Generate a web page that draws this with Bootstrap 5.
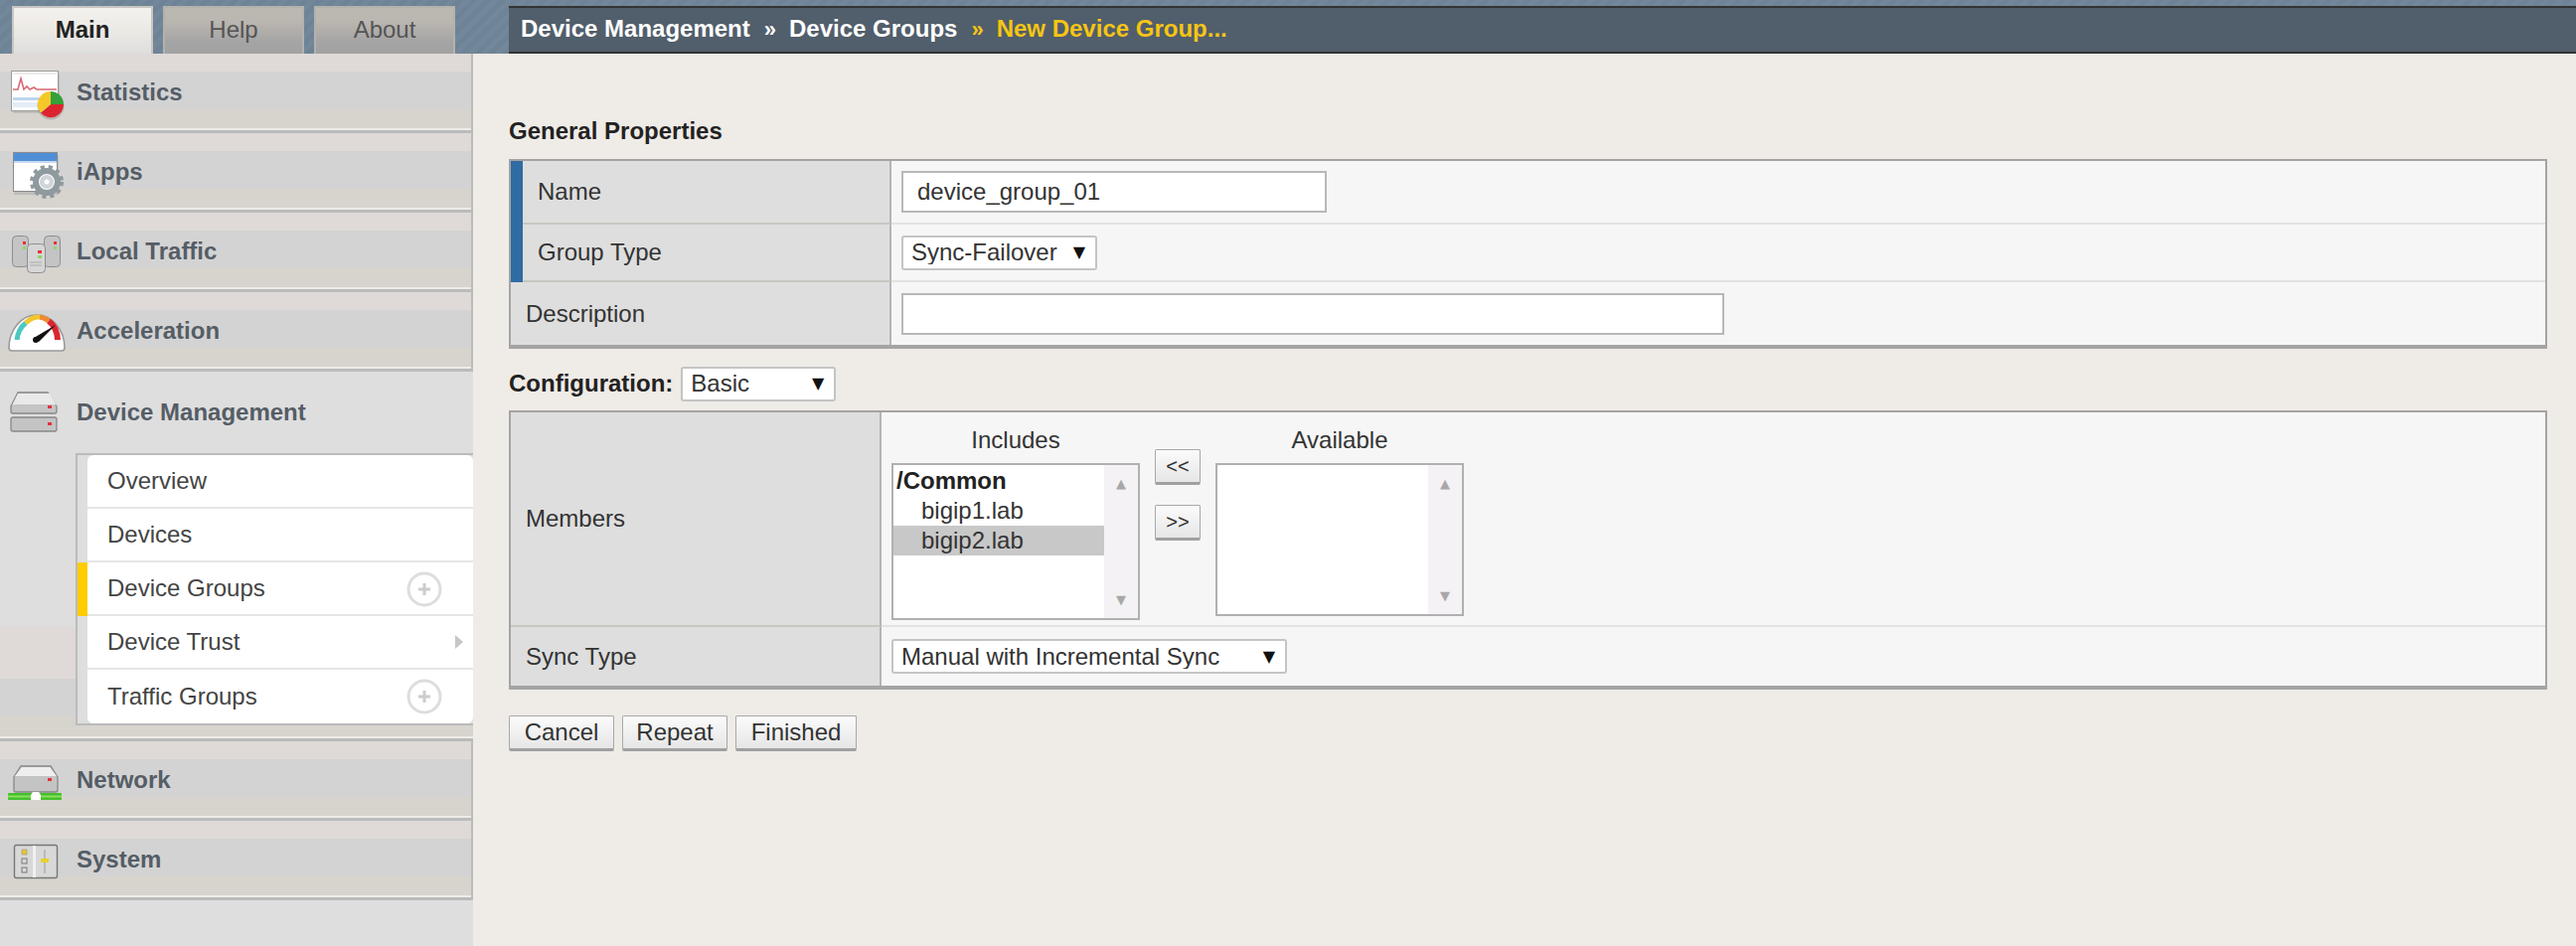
<!DOCTYPE html>
<html lang="en">
<head>
    <meta charset="UTF-8">
    <meta name="viewport" content="width=device-width, initial-scale=1.0">
    <title>New Device Group</title>
    <link href="https://cdn.jsdelivr.net/npm/bootstrap@5.3.0/dist/css/bootstrap.min.css" rel="stylesheet">
    <style>
        html, body { height: 100%; }
        body { background: #efebe6; font-family: "Liberation Sans", Arial, sans-serif; font-size: 24px; color: #333; overflow: hidden; }

        /* top strip */
        .top-strip { height: 54px; background: repeating-linear-gradient(135deg, #72889a 0 5px, #6e8395 5px 10px); }
        .tab-box { width: 512px; padding: 6px 0 0 12px; gap: 10px; }
        .tab-item { width: 142px; height: 48px; line-height: 44px; text-align: center; color: #555; text-decoration: none; border: 2px solid #b4b2ad; border-bottom: 0; background: linear-gradient(#bcb8b2, #bab6b0 30%, #a4a4a4 75%, #a2a2a2); }
        .tab-item.on { color: #222; font-weight: 700; border-color: #c8c6c2; background: linear-gradient(#f3f1ef, #eeebe6 40%, #dedede); }
        .crumb-bar { flex: 1; margin-top: 6px; height: 48px; padding-left: 12px; background: #515e6b; border-top: 2px solid #333; border-bottom: 2px solid #333; color: #fff; font-weight: 700; line-height: 42px; white-space: nowrap; }
        .crumb-sep { margin: 0 13px 0 14px; font-size: 22px; }
        .crumb-now { color: #f6c514; }

        /* side menu */
        .side-menu { width: 476px; flex: none; background: #dedede; height: 898px; }
        .menu-item { height: 80px; border-right: 2px solid #bbb; border-bottom: 3px solid #bbb; box-shadow: inset 0 -2px 0 #efece8; background: linear-gradient(#dfdad7 0 18px, #d3d3d3 18px 56px, #d7d4ce 56px); color: #555d66; font-weight: 700; text-decoration: none; }
        .menu-item svg, .menu-head svg { width: 60px; height: 60px; margin: 0 9px 0 8px; flex: none; }
        .menu-open { background: linear-gradient(to top, #d7d4ce 0 23px, #d3d3d3 23px 60px, #dfdad7 60px 113px, #dedede 113px); height: 372px; border-bottom: 3px solid #bbb; box-shadow: inset 0 -2px 0 #efece8; }
        .menu-head { height: 82px; color: #555d66; font-weight: 700; }
        .sub-menu { margin-left: 76px; border: 2px solid #bbb; border-right: 0; background: #dedede; padding-left: 10px; }
        .sub-row { height: 54px; padding: 0 0 0 20px; background: #fff; border: 0; border-bottom: 2px solid #e6e6e6; border-radius: 0; color: #444; position: relative; }
        .sub-row:last-child { border-bottom: 0; }
        .sub-row.on::before { content: ""; position: absolute; left: -10px; top: 0; bottom: -2px; width: 10px; background: #fc0; }
        .add-ring { position: absolute; right: 31px; top: 9px; width: 36px; height: 36px; }
        .more-arrow { position: absolute; right: 10px; top: 19px; width: 0; height: 0; border-left: 8px solid #c6c6c6; border-top: 7px solid transparent; border-bottom: 7px solid transparent; }

        /* form area */
        .form-area { padding: 0 29px 0 36px; }
        .sect-title { font-weight: 700; color: #222; }
        .prop-table { width: 100%; border-collapse: separate; border-spacing: 0; border: 2px solid #a4a4a4; border-bottom-width: 4px; }
        .prop-table th { background: #dedede; font-weight: 400; color: #333; border-right: 2px solid #b4b4b4; border-bottom: 2px solid #c8c6c2; padding: 0 0 0 15px; position: relative; }
        .prop-table td { background: #f6f6f6; border-bottom: 2px solid #e2e2e2; padding: 0 0 0 10px; }
        .prop-table tr:last-child th, .prop-table tr:last-child td { border-bottom: 0; }
        .prop-table th.must { padding-left: 27px; }
        .prop-table th.must::before { content: ""; position: absolute; left: 0; top: 0; bottom: -2px; width: 12px; background: #2f6ca3; }
        .text-in { height: 42px; border: 2px solid #b8b8b8; border-radius: 0; padding: 0 14px; font-size: 24px; color: #333; background: #fff; line-height: 1; }
        .pick-wrap { display: inline-block; position: relative; }
        .pick-wrap::after { content: "▼"; position: absolute; right: 12px; top: 50%; transform: translateY(-50%); font-size: 16px; color: #111; font-family: "DejaVu Sans", sans-serif; pointer-events: none; }
        .pick-in { appearance: none; display: block; height: 35px; padding: 0 0 0 8px; font-family: inherit; font-size: 24px; color: #333; background: #fff; border: 2px solid #c4c4c4; border-radius: 3px; line-height: 1; }
        .list-box { width: 250px; height: 158px; border: 2px solid #b0b0b0; background: #fff; line-height: 30px; color: #333; }
        .list-box.short { height: 154px; }
        .list-lines { flex: 1; padding-top: 1px; }
        .list-lines div { padding-left: 28px; }
        .list-lines .grp { padding-left: 3px; font-weight: 700; color: #222; }
        .list-lines .sel { background: #c8c8c8; }
        .scroll-strip { width: 34px; background: #f5f2f5; color: #a8a8a8; font-size: 13px; line-height: 1; padding: 12px 0; font-family: "DejaVu Sans", sans-serif; }
        .plain-btn { height: 36px; padding: 0; font-size: 24px; line-height: 1; color: #333; border: 1px solid #a8a8a8; border-bottom: 3px solid #a0a0a0; border-radius: 2px; background: linear-gradient(#fbfbfb, #e6e6e6); }
        .w-cancel { width: 106px; }
        .w-repeat { width: 106px; }
        .w-finish { width: 122px; }
        .w-move { width: 46px; font-size: 20px; }
    </style>
</head>
<body>
    <div class="top-strip d-flex">
        <div class="tab-box d-flex">
            <a href="#" class="tab-item on">Main</a>
            <a href="#" class="tab-item">Help</a>
            <a href="#" class="tab-item">About</a>
        </div>
        <div class="crumb-bar">Device Management<span class="crumb-sep">»</span>Device Groups<span class="crumb-sep crumb-now">»</span><span class="crumb-now">New Device Group...</span></div>
    </div>

    <div class="d-flex">
        <nav class="side-menu d-flex flex-column">
            <a href="#" class="menu-item d-flex align-items-center">
                <svg viewBox="0 0 60 60">
                    <rect x="5" y="11" width="47" height="40" fill="#999" opacity=".35"/>
                    <rect x="3.5" y="8.5" width="47" height="40" fill="#fff" stroke="#9a9a9a"/>
                    <rect x="5" y="10" width="44" height="2" fill="#f0eaea"/>
                    <path d="M5 27h5l3-11 3 11 3-3 3 3 4-2 3 2h20" fill="none" stroke="#d66a72" stroke-width="1.6"/>
                    <rect x="5" y="35" width="44" height="3" fill="#bcd6ee"/>
                    <rect x="5" y="40" width="44" height="5" fill="#e3edf6"/>
                    <circle cx="43" cy="44" r="13.5" fill="#777" opacity=".35"/>
                    <path d="M43 42V29a13 13 0 0 1 13 13z" fill="#35a13a"/>
                    <path d="M43 42H56a13 13 0 0 1-23 8.5z" fill="#dc2430"/>
                    <path d="M43 42L33 50.5A13 13 0 0 1 43 29z" fill="#f5c82a"/>
                </svg>
                Statistics
            </a>
            <a href="#" class="menu-item d-flex align-items-center">
                <svg viewBox="0 0 60 60">
                    <rect x="6" y="13" width="45" height="40" fill="#888" opacity=".3"/>
                    <rect x="5.5" y="10.5" width="44" height="39" fill="#fff" stroke="#8a8a8a"/>
                    <rect x="6" y="11" width="43" height="8" fill="#4f8fd8"/>
                    <rect x="6" y="19" width="43" height="2" fill="#c8d8ee"/>
                    <circle cx="39" cy="40" r="11" fill="none" stroke="#8f9a9f" stroke-width="6"/>
                    <circle cx="39" cy="40" r="15" fill="none" stroke="#8f9a9f" stroke-width="4" stroke-dasharray="4 4"/>
                    <circle cx="39" cy="40" r="7" fill="#cfd5d8"/>
                    <circle cx="39" cy="40" r="2.5" fill="#fff"/>
                </svg>
                iApps
            </a>
            <a href="#" class="menu-item d-flex align-items-center">
                <svg viewBox="0 0 60 60">
                    <rect x="4.5" y="14.5" width="16" height="31" rx="4" fill="#c4c4c4" stroke="#8e8e8e"/>
                    <rect x="36.5" y="14.5" width="16" height="31" rx="4" fill="#c4c4c4" stroke="#8e8e8e"/>
                    <rect x="19.5" y="22.5" width="18" height="29" rx="4" fill="#d6d6d6" stroke="#8e8e8e"/>
                    <rect x="15" y="20" width="3" height="3" fill="#e8303c"/>
                    <rect x="15" y="25" width="3" height="3" fill="#8ed66a"/>
                    <rect x="46" y="20" width="3" height="3" fill="#e8303c"/>
                    <rect x="46" y="25" width="3" height="3" fill="#8ed66a"/>
                    <rect x="30" y="29" width="4" height="3" fill="#e8303c"/>
                    <rect x="30" y="34" width="4" height="3" fill="#8ed66a"/>
                    <path d="M22 41h12M22 44h12" stroke="#aaa"/>
                </svg>
                Local Traffic
            </a>
            <a href="#" class="menu-item d-flex align-items-center">
                <svg viewBox="0 0 60 60">
                    <path d="M1 47a28 33 0 0 1 56 0q0 3-3 3H4q-3 0-3-3z" fill="#fff" stroke="#999" stroke-width="1.6"/>
                    <path d="M9 39a20 24 0 0 1 9-17" fill="none" stroke="#4cc8c0" stroke-width="5"/>
                    <path d="M18 22a20 24 0 0 1 14-6" fill="none" stroke="#f2c62e" stroke-width="5"/>
                    <path d="M32 16a20 24 0 0 1 9 4" fill="none" stroke="#f08a30" stroke-width="5"/>
                    <path d="M41 20a20 24 0 0 1 9 19" fill="none" stroke="#d9262e" stroke-width="6"/>
                    <path d="M26 37L48 24 31 41z" fill="#111"/>
                    <circle cx="28" cy="39" r="3" fill="#111"/>
                </svg>
                Acceleration
            </a>
            <div class="menu-open">
                <div class="menu-head d-flex align-items-center">
                    <svg viewBox="0 0 60 60">
                        <path d="M3 29v-5l7-14h30l9 14v5q0 2-2 2H5q-2 0-2-2z" fill="#c4c4c4" stroke="#888" stroke-width="1.3"/>
                        <path d="M4 23q1-1 3-1h38q3 0 4 1l-7-12H10z" fill="#e9e9e9"/>
                        <rect x="40" y="23" width="4" height="3" fill="#e8303c"/>
                        <rect x="3" y="35" width="46" height="14" rx="2" fill="#c4c4c4" stroke="#888" stroke-width="1.3"/>
                        <rect x="40" y="40" width="4" height="3" fill="#e8303c"/>
                    </svg>
                    Device Management
                </div>
                <div class="sub-menu">
                    <ul class="list-group">
                        <li class="list-group-item sub-row d-flex align-items-center">Overview</li>
                        <li class="list-group-item sub-row d-flex align-items-center">Devices</li>
                        <li class="list-group-item sub-row on d-flex align-items-center">Device Groups
                            <svg class="add-ring" viewBox="0 0 36 36"><circle cx="18" cy="18" r="16" fill="#fff" stroke="#ddd" stroke-width="3"/><path d="M18 12v12M12 18h12" stroke="#ccc" stroke-width="3"/></svg>
                        </li>
                        <li class="list-group-item sub-row d-flex align-items-center">Device Trust<span class="more-arrow"></span></li>
                        <li class="list-group-item sub-row d-flex align-items-center">Traffic Groups
                            <svg class="add-ring" viewBox="0 0 36 36"><circle cx="18" cy="18" r="16" fill="#fff" stroke="#ddd" stroke-width="3"/><path d="M18 12v12M12 18h12" stroke="#ccc" stroke-width="3"/></svg>
                        </li>
                    </ul>
                </div>
            </div>
            <a href="#" class="menu-item d-flex align-items-center">
                <svg viewBox="0 0 60 60">
                    <path d="M6 40V27l7-11h30l7 11v13q0 2-2 2H8q-2 0-2-2z" fill="#c4c4c4" stroke="#888" stroke-width="1.3"/>
                    <path d="M7 26l7-9h28l7 9z" fill="#eee"/>
                    <rect x="40" y="28" width="4" height="3" fill="#e8303c"/>
                    <rect x="0" y="43" width="54" height="7" rx="1" fill="#43c02c"/>
                    <path d="M0 46.5h54" stroke="#8ce05c" stroke-width="2"/>
                    <path d="M23 50v-5l2-3h6l2 3v5z" fill="#fff"/>
                </svg>
                Network
            </a>
            <a href="#" class="menu-item d-flex align-items-center">
                <svg viewBox="0 0 60 60">
                    <rect x="6.5" y="15.5" width="43" height="33" rx="2" fill="#d8d8d8" stroke="#777" stroke-width="1.4"/>
                    <rect x="25" y="16" width="3" height="32" fill="#f0f0f0"/>
                    <rect x="14" y="20" width="5" height="5" fill="#e8c82a" stroke="#888" stroke-width=".5"/>
                    <rect x="14" y="29" width="5" height="5" fill="none" stroke="#777"/>
                    <rect x="14" y="38" width="5" height="5" fill="none" stroke="#777"/>
                    <path d="M37 20v24" stroke="#999"/>
                    <rect x="33" y="29" width="8" height="4" fill="#e8d22a"/>
                </svg>
                System
            </a>
        </nav>

        <main class="form-area flex-grow-1">
            <div class="sect-title d-flex align-items-center" style="height:106px;padding-top:50px">General Properties</div>
            <table class="prop-table">
                <tbody>
                    <tr style="height:64px"><th class="must" style="width:383px">Name</th><td><input class="text-in d-block" style="width:428px" value="device_group_01"></td></tr>
                    <tr style="height:58px"><th class="must">Group Type</th><td><span class="pick-wrap"><select class="pick-in" style="width:197px"><option>Sync-Failover</option></select></span></td></tr>
                    <tr style="height:63px"><th>Description</th><td><input class="text-in d-block" style="width:828px"></td></tr>
                </tbody>
            </table>

            <div class="d-flex align-items-center mt-3 mb-2" style="height:38px">
                <span class="sect-title">Configuration:</span>
                <span class="pick-wrap ms-2"><select class="pick-in" style="width:156px"><option>Basic</option></select></span>
            </div>
            <table class="prop-table">
                <tbody>
                    <tr style="height:216px">
                        <th style="width:373px;padding-left:15px">Members</th>
                        <td style="padding-left:10px">
                            <div class="d-flex">
                                <div>
                                    <div class="text-center" style="line-height:46px">Includes</div>
                                    <div class="list-box d-flex">
                                        <div class="list-lines">
                                            <div class="grp">/Common</div>
                                            <div>bigip1.lab</div>
                                            <div class="sel">bigip2.lab</div>
                                        </div>
                                        <div class="scroll-strip d-flex flex-column justify-content-between align-items-center"><span>▲</span><span>▼</span></div>
                                    </div>
                                </div>
                                <div class="d-flex flex-column" style="margin:32px 15px 0;gap:20px">
                                    <button class="btn plain-btn w-move">&lt;&lt;</button>
                                    <button class="btn plain-btn w-move">&gt;&gt;</button>
                                </div>
                                <div>
                                    <div class="text-center" style="line-height:46px">Available</div>
                                    <div class="list-box short d-flex">
                                        <div class="list-lines"></div>
                                        <div class="scroll-strip d-flex flex-column justify-content-between align-items-center"><span>▲</span><span>▼</span></div>
                                    </div>
                                </div>
                            </div>
                        </td>
                    </tr>
                    <tr style="height:59px">
                        <th style="padding-left:15px">Sync Type</th>
                        <td style="padding-left:10px"><span class="pick-wrap"><select class="pick-in" style="width:398px"><option>Manual with Incremental Sync</option></select></span></td>
                    </tr>
                </tbody>
            </table>

            <div class="d-flex gap-2" style="margin-top:26px">
                <button class="btn plain-btn w-cancel">Cancel</button>
                <button class="btn plain-btn w-repeat">Repeat</button>
                <button class="btn plain-btn w-finish">Finished</button>
            </div>
        </main>
    </div>
</body>
</html>
